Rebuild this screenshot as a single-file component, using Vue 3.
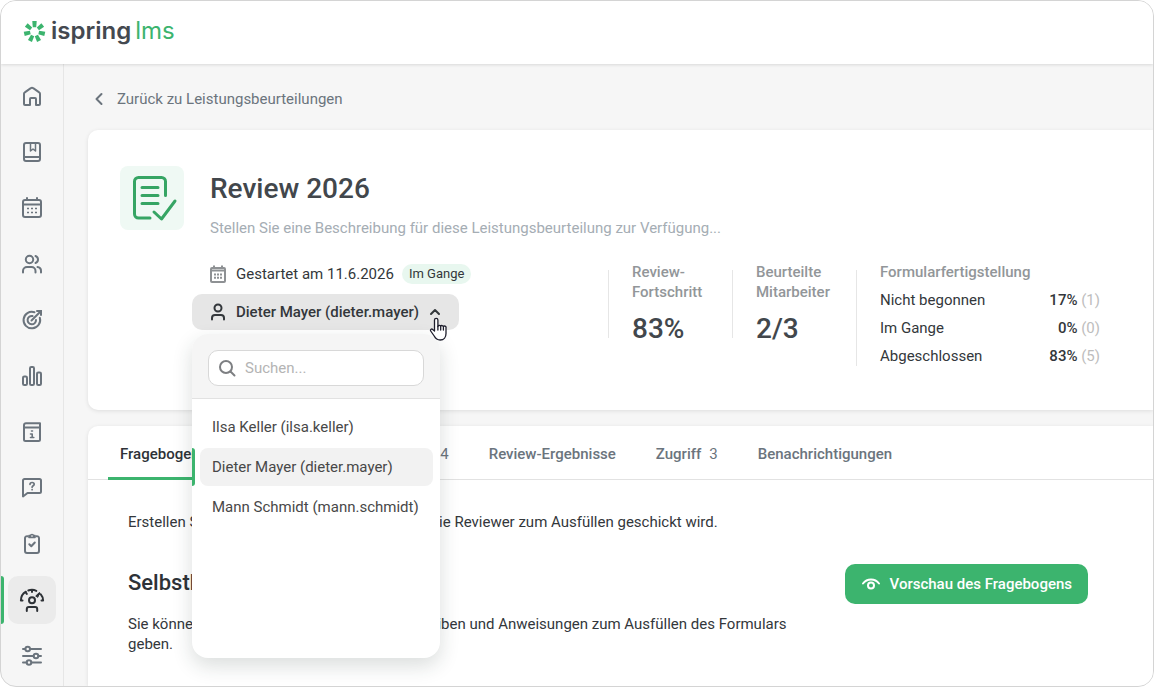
<script setup>
import { ref, computed } from 'vue';

const navItems = [
  { name: 'home', label: 'Startseite' },
  { name: 'book', label: 'Kurse' },
  { name: 'calendar', label: 'Kalender' },
  { name: 'users', label: 'Benutzer' },
  { name: 'target', label: 'Ziele' },
  { name: 'chart', label: 'Berichte' },
  { name: 'info', label: 'Wissensdatenbank' },
  { name: 'question', label: 'Fragen' },
  { name: 'tasks', label: 'Aufgaben' },
  { name: 'review', label: 'Leistungsbeurteilung' },
  { name: 'settings', label: 'Einstellungen' },
];
const activeNav = ref('review');

const tabs = [
  { id: 'form', label: 'Fragebogen' },
  { id: 'people', label: 'Beurteilte und Reviewgruppe', count: 4 },
  { id: 'results', label: 'Review-Ergebnisse' },
  { id: 'access', label: 'Zugriff', count: 3 },
  { id: 'notifications', label: 'Benachrichtigungen' },
];
const activeTab = ref('form');

const completion = [
  { label: 'Nicht begonnen', percent: 17, count: 1 },
  { label: 'Im Gange', percent: 0, count: 0 },
  { label: 'Abgeschlossen', percent: 83, count: 5 },
];

// Reviewer dropdown
const people = [
  'Ilsa Keller (ilsa.keller)',
  'Dieter Mayer (dieter.mayer)',
  'Mann Schmidt (mann.schmidt)',
];
const selected = ref(people[1]);
const open = ref(true);
const search = ref('');

const filteredPeople = computed(() =>
  people.filter(p => p.toLowerCase().includes(search.value.toLowerCase()))
);

const selectPerson = (person) => {
  selected.value = person;
  open.value = false;
};

const rays = Array.from({ length: 7 }, (_, i) => `rotate(${(i * 360) / 7} 12 12)`);
</script>

<template>
  <div class="app">
    <header class="topbar">
      <a href="#" class="logo">
        <svg class="logo-mark" viewBox="0 0 24 24" aria-hidden="true">
          <path v-for="ray in rays" :key="ray" :transform="ray" d="M9.700 1h4.600l-.5 6.500h-3.600z" />
        </svg>
        <span class="logo-name">ispring</span>
        <span class="logo-product">lms</span>
      </a>
    </header>

    <div class="layout">
      <nav class="sidebar">
        <a
          v-for="item in navItems"
          :key="item.name"
          href="#"
          class="nav-item"
          :class="{ active: item.name === activeNav }"
          :aria-label="item.label"
          @click.prevent="activeNav = item.name"
        >
          <svg class="icon" viewBox="0 0 24 24" aria-hidden="true">
            <path v-if="item.name === 'home'" d="M4 9.7c0-.6.3-1.1.8-1.4l6-4.1a2 2 0 0 1 2.4 0l6 4.1c.5.3.8.8.8 1.4V20a1 1 0 0 1-1 1h-3v-6a1 1 0 0 0-1-1h-4a1 1 0 0 0-1 1v6H5a1 1 0 0 1-1-1z" />
            <g v-else-if="item.name === 'book'">
              <rect x="4" y="3" width="16" height="18" rx="2" />
              <path d="M4 17h16" />
              <path d="M10.5 3v8l2.5-2 2.5 2V3" stroke-width="1.5" />
            </g>
            <g v-else-if="item.name === 'calendar'">
              <rect x="3" y="4" width="18" height="17" rx="2" />
              <path d="M3 8.500h18M7 2v2M17 2v2" />
              <path d="M7 12.500h2M11 12.500h2M15 12.500h2M7 16.500h2M11 16.500h2M15 16.500h2" stroke-width="1.5" stroke-linecap="butt" />
            </g>
            <g v-else-if="item.name === 'users'">
              <circle cx="9.500" cy="7.500" r="3.700" />
              <path d="M3 20.500V19a4 4 0 0 1 4-4h4.500a4 4 0 0 1 4 4v1.500M15.500 4a3.700 3.700 0 0 1 0 7M17.500 15a3.700 3.700 0 0 1 3.500 4v1.500" />
            </g>
            <g v-else-if="item.name === 'target'">
              <path d="M14.500 4.200a8.300 8.300 0 1 0 5.300 5.500M12.500 8a4.200 4.200 0 1 0 3.500 4M11.500 12.500l8-8" />
              <path d="M17 3h4v4" stroke-linejoin="miter" />
            </g>
            <g v-else-if="item.name === 'chart'">
              <rect x="3" y="12.500" width="4" height="8.500" rx="1.300" />
              <rect x="10" y="3" width="4" height="18" rx="1.300" />
              <rect x="17" y="8.500" width="4" height="12.500" rx="1.300" />
            </g>
            <g v-else-if="item.name === 'info'">
              <path d="M20 7.500H4.500M20 3.200H6A2 2 0 0 0 4 5v14.500A1.500 1.500 0 0 0 5.500 21h13a1.500 1.500 0 0 0 1.500-1.500V3.200" />
              <path d="M11.500 11h1M10.500 14h1.700v3.500M10.500 17.500h3.300" stroke-width="1.600" />
            </g>
            <g v-else-if="item.name === 'question'">
              <path d="M3 20.500V4.500A1.500 1.500 0 0 1 4.500 3h15A1.500 1.500 0 0 1 21 4.500v11a1.500 1.500 0 0 1-1.500 1.500H7.500z" />
              <path d="M10 8.300c0-2.400 4.200-2.400 4.200 0 0 1.500-2.100 1.500-2.100 3M12.100 13.500v.2" stroke-width="1.700" />
            </g>
            <g v-else-if="item.name === 'tasks'">
              <path d="M7.500 4.200A2 2 0 0 0 5 6v13a2 2 0 0 0 2 2h10a2 2 0 0 0 2-2V6a2 2 0 0 0-2.500-1.800" />
              <path d="M9 3.700h1.300a1.800 1.800 0 0 1 3.400 0H15v1.600H9z" stroke-width="1.700" />
              <path d="M9.300 12.200l2 2 3.500-3.700" />
            </g>
            <g v-else-if="item.name === 'review'">
              <path d="M2.500 12.500H.9c0-3.700 2-7 5-8.800M8.300 2.500c2.600-.9 5.600-.8 8 .4M20.800 6.300c1.500 1.700 2.300 3.800 2.300 6.200h-1.600M5.500 4.200l1.300 1.700M12 2.200v1.900M17.500 7.500l1.800-2" />
              <path d="M16 7.800l3.600-3.200-1.700 4.400z" stroke-width="1" fill="currentColor" />
              <circle cx="12" cy="12.300" r="3" />
              <path d="M6.800 23v-2a2 2 0 0 1 2-2h6.400a2 2 0 0 1 2 2v2" />
            </g>
            <g v-else>
              <path d="M3 5h2.300M10 5h11M3 12h10.500M18.500 12H21M3 18.500h3.500M11.500 18.500H21" />
              <circle cx="7.700" cy="5" r="2.300" />
              <circle cx="16" cy="12" r="2.300" />
              <circle cx="9" cy="18.500" r="2.300" />
            </g>
          </svg>
        </a>
      </nav>

      <main class="content">
        <a href="#" class="back-link">
          <svg class="chevron" viewBox="0 0 12 16" aria-hidden="true"><path d="M8.500 3L3.500 8l5 5" /></svg>
          Zurück zu Leistungsbeurteilungen
        </a>

        <section class="card summary">
          <div class="review-icon">
            <svg viewBox="0 0 64 64" aria-hidden="true">
              <path d="M30 52H18.500a4 4 0 0 1-4-4V15.500a4 4 0 0 1 4-4h23a4 4 0 0 1 4 4V29.500" />
              <path d="M22 21.500h16M22 29.500h16M22 37.500h16M34 46l7.500 7L55 35" />
            </svg>
          </div>

          <div class="summary-main">
            <h1 class="title">Review 2026</h1>
            <p class="description">Stellen Sie eine Beschreibung für diese Leistungsbeurteilung zur Verfügung...</p>

            <div class="summary-row">
              <div class="details">
                <div class="started">
                  <svg class="started-icon" viewBox="0 0 16 20" aria-hidden="true">
                    <rect x="1" y="4" width="14" height="14" rx="1" />
                    <path d="M1 6.500h14M4 1.500V4M12 1.500V4" />
                    <path d="M4 10.500h2M7 10.500h2M10 10.500h2M4 13.800h2M7 13.800h2M10 13.800h2" />
                  </svg>
                  <span>Gestartet am 11.6.2026</span>
                  <span class="badge">Im Gange</span>
                </div>

                <div class="picker">
                  <button type="button" class="picker-button" :aria-expanded="open" @click="open = !open">
                    <svg class="person" viewBox="0 0 16 18" aria-hidden="true">
                      <circle cx="8" cy="5" r="3.500" />
                      <path d="M2 16.500V15a3 3 0 0 1 3-3h6a3 3 0 0 1 3 3v1.500" />
                    </svg>
                    {{ selected }}
                    <svg class="caret" viewBox="0 0 12 8" aria-hidden="true"><path d="M2 6l4-4 4 4" /></svg>
                  </button>
                  <svg class="pointer" viewBox="0 0 18 24" aria-hidden="true">
                    <path d="M5.500 14V3a1.700 1.700 0 0 1 3.400 0v6.500a1.600 1.600 0 0 1 2.700-.5 1.600 1.600 0 0 1 2.700.7 1.500 1.500 0 0 1 2.700 1.200v5.500c0 3.500-2 6.600-5.800 6.600-3 0-4.700-1.500-6-4L1.700 14c-.7-1.600 1-2.500 2-1.500z" />
                    <path d="M8.900 9.500v3.500M11.700 9.500v3.500M14.400 10.500v2.500" />
                  </svg>

                  <div v-if="open" class="menu">
                    <div class="menu-search">
                      <label class="search-box">
                        <svg class="search-icon" viewBox="0 0 18 18" aria-hidden="true">
                          <circle cx="8" cy="8" r="6" />
                          <path d="M12.500 12.500l4 4" />
                        </svg>
                        <input v-model="search" type="text" placeholder="Suchen..." aria-label="Suchen" />
                      </label>
                    </div>
                    <ul class="menu-list">
                      <li v-for="person in filteredPeople" :key="person" :class="{ current: person === selected }">
                        <button type="button" @click="selectPerson(person)">{{ person }}</button>
                      </li>
                    </ul>
                  </div>
                </div>
              </div>

              <div class="stats">
                <div class="stat">
                  <div>
                    <div class="stat-label">Review-<br />Fortschritt</div>
                    <div class="stat-value">83%</div>
                  </div>
                </div>
                <div class="stat">
                  <div>
                    <div class="stat-label">Beurteilte<br />Mitarbeiter</div>
                    <div class="stat-value">2/3</div>
                  </div>
                </div>
                <div class="stat wide">
                  <div class="completion">
                    <div class="stat-label">Formularfertigstellung</div>
                    <table>
                      <tbody>
                        <tr v-for="row in completion" :key="row.label">
                          <th scope="row">{{ row.label }}</th>
                          <td><b>{{ row.percent }}%</b> <span>({{ row.count }})</span></td>
                        </tr>
                      </tbody>
                    </table>
                  </div>
                </div>
              </div>
            </div>
          </div>
        </section>

        <section class="card form-card">
          <div class="tabs">
            <button
              v-for="tab in tabs"
              :key="tab.id"
              type="button"
              class="tab"
              :class="{ active: tab.id === activeTab }"
              @click="activeTab = tab.id"
            >
              {{ tab.label }}
              <span v-if="tab.count" class="tab-count">{{ tab.count }}</span>
            </button>
          </div>

          <div class="form-body">
            <p>Erstellen Sie einen Fragebogen, der später an die Reviewer zum Ausfüllen geschickt wird.</p>
            <div class="section-head">
              <h2>Selbstbeurteilung</h2>
              <button type="button" class="primary-button">
                <svg class="eye" viewBox="0 0 20 14" aria-hidden="true">
                  <path d="M2 6.500c4-5.300 12-5.300 16 0" />
                  <circle cx="10" cy="8.500" r="3" />
                </svg>
                Vorschau des Fragebogens
              </button>
            </div>
            <p class="hint">Sie können den Titel des Fragebogens beschreiben und Anweisungen zum Ausfüllen des Formulars geben.</p>
          </div>
        </section>
      </main>
    </div>
  </div>
</template>

<style>
body {
  margin: 0;
  background: #fff;
}
</style>

<style scoped>
.app {
  display: flex;
  flex-direction: column;
  box-sizing: border-box;
  min-height: 100vh;
  border: 1px solid #d4d4d4;
  border-radius: 16px;
  overflow: hidden;
  background: #f6f6f6;
  color: #33373b;
  font-family: Roboto, "Liberation Sans", sans-serif;
  font-size: 15px;
  line-height: 20px;
}

.app * {
  box-sizing: border-box;
}

h1, h2, p, ul {
  margin: 0;
  padding: 0;
}

button {
  border: 0;
  background: none;
  font: inherit;
  color: inherit;
  cursor: pointer;
}

a {
  color: inherit;
  text-decoration: none;
}

svg {
  flex: none;
  fill: none;
  stroke: currentColor;
  stroke-width: 2;
  stroke-linecap: round;
  stroke-linejoin: round;
}

.topbar {
  position: relative;
  display: flex;
  align-items: center;
  height: 63px;
  padding: 0 22px 3px;
  background: #fff;
  box-shadow: 0 1px 3px rgba(0, 0, 0, 0.12);
}

.logo {
  display: flex;
  align-items: center;
  font-family: Inter, Roboto, sans-serif;
  font-size: 24px;
  line-height: 32px;
}

.logo-mark {
  width: 23px;
  height: 23px;
  margin-right: 5px;
  fill: #3cb46e;
  stroke: none;
}

.logo-name {
  font-weight: 600;
  color: #444950;
}

.logo-product {
  margin-left: 4px;
  font-weight: 400;
  color: #3cb46e;
}

.layout {
  display: flex;
  flex: 1;
}

.sidebar {
  display: flex;
  flex-direction: column;
  flex: none;
  gap: 8px;
  width: 63px;
  padding: 8px 7px 6px;
  border-right: 1px solid #e6e6e6;
}

.nav-item {
  position: relative;
  display: flex;
  align-items: center;
  justify-content: center;
  width: 48px;
  height: 48px;
  border-radius: 10px;
  color: #6b747d;
}

.nav-item.active {
  background: #ebebeb;
  color: #2e3237;
}

.nav-item.active::before {
  content: "";
  position: absolute;
  left: -7px;
  width: 3px;
  height: 48px;
  border-radius: 0 3px 3px 0;
  background: #3cb46e;
}

.icon {
  width: 24px;
  height: 24px;
  overflow: visible;
}

.content {
  display: flex;
  flex-direction: column;
  flex: 1;
  min-width: 0;
  padding: 25px 0 0 24px;
}

.back-link {
  display: flex;
  align-items: center;
  align-self: flex-start;
  gap: 12px;
  padding-left: 5px;
  margin-bottom: 21px;
  color: #6b747d;
}

.chevron {
  width: 12px;
  height: 16px;
}

.card {
  border-radius: 10px 0 0 10px;
  background: #fff;
  box-shadow: 0 1px 4px rgba(0, 0, 0, 0.1);
}

.summary {
  position: relative;
  z-index: 1;
  display: flex;
  gap: 26px;
  min-height: 280px;
  padding: 36px 53px 36px 32px;
}

.review-icon {
  flex: none;
  width: 64px;
  height: 64px;
  border-radius: 8px;
  background: #eff9f4;
  color: #36a564;
}

.review-icon svg {
  display: block;
  stroke-width: 3;
}

.summary-main {
  flex: 1;
  min-width: 0;
}

.title {
  margin-top: 5px;
  font-size: 28px;
  font-weight: 500;
  line-height: 36px;
  color: #42474c;
}

.description {
  margin-top: 11px;
  color: #a5adb4;
}

.summary-row {
  display: flex;
  justify-content: space-between;
  margin-top: 24px;
}

.started {
  display: flex;
  align-items: center;
  gap: 10px;
  height: 24px;
}

.started-icon {
  width: 16px;
  height: 20px;
  color: #8e9194;
  stroke-linecap: butt;
}

.badge {
  margin-left: -2px;
  padding: 0 7px;
  border-radius: 10px;
  background: #e8f7ef;
  font-size: 13px;
}

.picker {
  position: relative;
  margin: 8px 0 0 -18px;
}

.picker-button {
  display: flex;
  align-items: center;
  height: 36px;
  padding: 0 18px;
  border-radius: 10px;
  background: #e6e6e6;
  font-weight: 500;
}

.person {
  width: 16px;
  height: 18px;
  margin-right: 10px;
}

.caret {
  width: 12px;
  height: 8px;
  margin-left: 10px;
}

.pointer {
  position: absolute;
  z-index: 3;
  top: 23px;
  left: 237px;
  width: 18px;
  height: 24px;
  color: #1d1d2b;
  fill: #fff;
  stroke-width: 1.3;
}

.menu {
  position: absolute;
  z-index: 2;
  top: 40px;
  left: 0;
  width: 248px;
  min-height: 324px;
  border-radius: 16px;
  background: #fff;
  box-shadow: 0 8px 20px rgba(30, 50, 45, 0.16);
}

.menu-search {
  padding: 16px 16px 12px;
  border-bottom: 1px solid #e2e2e2;
  border-radius: 16px 16px 0 0;
  background: #f5f5f5;
}

.search-box {
  display: flex;
  align-items: center;
  gap: 9px;
  height: 36px;
  padding: 0 9px;
  border: 1px solid #d8d8d8;
  border-radius: 10px;
  background: #fff;
}

.search-icon {
  width: 18px;
  height: 18px;
  color: #7d7f82;
}

.search-box input {
  flex: 1;
  min-width: 0;
  padding: 0;
  border: 0;
  outline: 0;
  background: none;
  font: inherit;
  color: inherit;
}

.search-box input::placeholder {
  color: #b4b4b4;
  opacity: 1;
}

.menu-list {
  display: flex;
  flex-direction: column;
  gap: 2px;
  padding: 9px 7px 9px 8px;
  list-style: none;
}

.menu-list li {
  position: relative;
}

.menu-list button {
  width: 100%;
  height: 38px;
  padding: 0 12px;
  border-radius: 8px;
  text-align: left;
  color: #484848;
}

.menu-list .current button {
  background: #f2f2f2;
}

.menu-list .current::before {
  content: "";
  position: absolute;
  left: -8px;
  width: 3px;
  height: 38px;
  border-radius: 0 3px 3px 0;
  background: #3cb46e;
}

.stats {
  display: flex;
  align-items: flex-start;
}

.stat {
  display: flex;
  width: 124px;
}

.stat.wide {
  width: 244px;
}

.stat::before {
  content: "";
  flex: none;
  width: 1px;
  margin: 8px 23px 6px 0;
  background: #e6e6e6;
}

.stat-label {
  font-weight: 500;
  color: #929699;
}

.stat-value {
  margin-top: 12px;
  font-size: 28px;
  font-weight: 500;
  line-height: 30px;
  color: #42474c;
}

.completion {
  flex: 1;
  padding-bottom: 2px;
}

.completion table {
  width: 100%;
  margin-top: 4px;
  border-collapse: collapse;
}

.completion th,
.completion td {
  height: 28px;
  padding: 0;
  font-weight: 400;
  text-align: left;
}

.completion td {
  text-align: right;
}

.completion b {
  font-weight: 500;
}

.completion span {
  color: #bdbdbd;
}

.form-card {
  flex: 1;
  margin-top: 16px;
  border-bottom-left-radius: 0;
}

.tabs {
  display: flex;
  gap: 16px;
  height: 54px;
  padding: 0 20px;
  border-bottom: 1px solid #e2e2e2;
}

.tab {
  display: flex;
  align-items: center;
  gap: 8px;
  height: 54px;
  padding: 5px 12px 0;
  border-bottom: 3px solid transparent;
  font-weight: 500;
  white-space: nowrap;
  color: #6b747d;
}

.tab.active {
  border-color: #3cb46e;
  color: #2e3237;
}

.tab-count {
  font-weight: 400;
}

.form-body {
  padding: 32px 65px 32px 40px;
}

.section-head {
  display: flex;
  align-items: center;
  justify-content: space-between;
  margin: 32px 0 10px;
}

.section-head h2 {
  padding-bottom: 2px;
  font-size: 22px;
  font-weight: 500;
  line-height: 28px;
  color: #2e3237;
}

.primary-button {
  display: flex;
  align-items: center;
  gap: 9px;
  height: 40px;
  padding: 0 16px;
  border-radius: 10px;
  background: #3cb46e;
  font-weight: 500;
  color: #fff;
}

.eye {
  width: 20px;
  height: 14px;
}

.hint {
  max-width: 680px;
}
</style>
